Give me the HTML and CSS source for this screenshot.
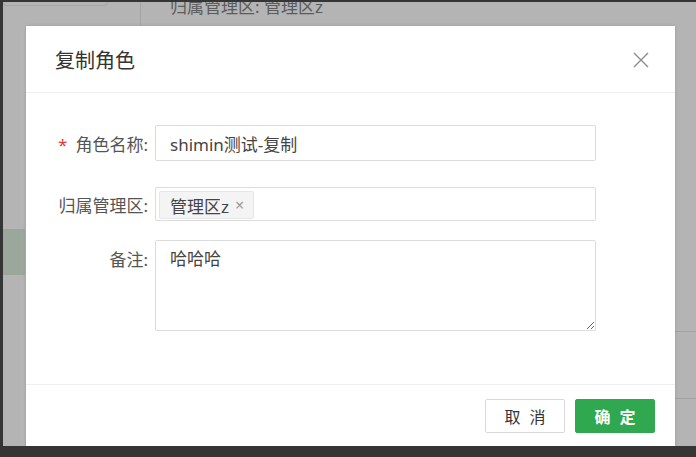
FILE: index.html
```html
<!DOCTYPE html>
<html>
<head>
<meta charset="UTF-8">
<title>复制角色</title>
<link rel="stylesheet" href="styles.css">
</head>
<body>
<div class="screen">
	<!-- 背景页面（被遮罩盖住） -->
	<div class="bg-top">
		<div class="bg-btn"></div>
		<div class="bg-line"></div>
		<div class="bg-text">归属管理区: 管理区z</div>
	</div>
	<div class="bg-side"></div>
	<div class="bg-rule bg-rule1"></div>
	<div class="bg-rule bg-rule2"></div>

	<div class="modal">
		<div class="modal-head">
			<span class="modal-title">复制角色</span>
			<a class="modal-close" href="javascript:;">
				<svg width="16" height="16" viewBox="0 0 16 16"><path d="M1 1L15 15M15 1L1 15" stroke="#8c8c8c" stroke-width="1.4" fill="none"/></svg>
			</a>
		</div>
		<div class="modal-body">
			<div class="form-row">
				<label class="form-label"><i class="req">*</i>角色名称:</label>
				<div class="form-field"><input class="input" type="text" value="shimin测试-复制"></div>
			</div>
			<div class="form-row row-area">
				<label class="form-label">归属管理区:</label>
				<div class="form-field">
					<div class="select">
						<span class="tag">管理区z<em class="tag-x">×</em></span>
					</div>
				</div>
			</div>
			<div class="form-row row-top">
				<label class="form-label">备注:</label>
				<div class="form-field"><textarea class="textarea">哈哈哈</textarea></div>
			</div>
		</div>
		<div class="modal-foot">
			<button class="btn btn-cancel">取消</button>
			<button class="btn btn-ok">确定</button>
		</div>
	</div>
</div>
</body>
</html>
```

FILE: styles.css
```css
body{
	margin:0;
	padding:0;
	background:#353535;
	font-family:"Noto Sans","Noto Sans CJK SC",sans-serif;
}
.screen{
	margin:2px 0 0 3px;
	height:444px;
	background:#b4b4b4;
	position:relative;
	overflow:hidden;
}
.bg-top{
	display:flex;
	height:24px;
}
.bg-btn{
	width:103px;
	height:3px;
	border:1px solid #a6a6a6;
	border-top:none;
	border-radius:0 0 4px 4px;
}
.bg-line{
	width:1px;
	margin-left:32px;
	background:#a4a4a4;
}
.bg-text{
	margin:-5px 0 0 29px;
	font-size:17px;
	line-height:20px;
	color:#5b5b5b;
}
.bg-side{
	width:22px;
	height:46px;
	margin-top:203px;
	background:#9ba69d;
}
.bg-rule{
	position:absolute;
	right:0;
	width:44px;
	height:1px;
	background:#a2a2a2;
}
.bg-rule1{top:329px;}
.bg-rule2{top:396px;}

.modal{
	position:absolute;
	left:23px;
	top:24px;
	width:649px;
	height:420px;
	background:#fff;
	display:flex;
	flex-direction:column;
	box-shadow:0 0 3px rgba(0,0,0,0.15);
}
.modal-head{
	height:67px;
	padding:0 26px 0 29px;
	display:flex;
	align-items:center;
	justify-content:space-between;
	border-bottom:1px solid #efefef;
	box-sizing:border-box;
}
.modal-title{
	font-size:20px;
	color:#333;
}
.modal-close{
	display:block;
	width:16px;
	height:16px;
	margin-top:2px;
}
.modal-close svg{display:block;}
.modal-body{
	flex:1;
	padding:32px 79px 0 29px;
}
.form-row{
	display:flex;
	align-items:center;
	margin-bottom:26px;
}
.form-row.row-area{margin-bottom:19px;}
.form-row.row-top{align-items:flex-start;}
.form-label{
	width:93px;
	margin-right:7px;
	text-align:right;
	font-size:17px;
	color:#555;
	white-space:nowrap;
}
.row-top .form-label{padding-top:6px;}
.req{
	font-style:normal;
	color:#e53935;
	margin-right:8px;
}
.form-field{flex:1;}
.input,.textarea,.select{
	width:100%;
	box-sizing:border-box;
	border:1px solid #dcdcdc;
	border-radius:2px;
	font-family:inherit;
	font-size:17px;
	color:#444;
	background:#fff;
	outline:none;
}
.input{
	height:36px;
	padding:0 14px;
}
.select{
	height:34px;
	padding:3px;
}
.tag{
	display:inline-flex;
	align-items:center;
	height:26px;
	padding:0 9px 0 10px;
	background:#f4f4f4;
	border:1px solid #e6e6e6;
	border-radius:2px;
	font-size:17px;
	color:#444;
}
.tag-x{
	font-style:normal;
	color:#9a9a9a;
	font-size:16px;
	margin-left:6px;
}
.textarea{
	display:block;
	height:91px;
	padding:7px 14px;
	resize:vertical;
	line-height:22px;
}
.modal-foot{
	height:62px;
	padding:14px 20px 0 0;
	border-top:1px solid #efefef;
	box-sizing:border-box;
	display:flex;
	justify-content:flex-end;
	align-items:flex-start;
	gap:10px;
}
.btn{
	width:80px;
	height:34px;
	border-radius:2px;
	font-family:inherit;
	font-size:16px;
	letter-spacing:9px;
	text-indent:9px;
	cursor:pointer;
}
.btn-cancel{
	background:#fff;
	border:1px solid #d9d9d9;
	color:#333;
}
.btn-ok{
	background:#2fa84f;
	border:1px solid #2fa84f;
	color:#fff;
	font-weight:bold;
}
```
